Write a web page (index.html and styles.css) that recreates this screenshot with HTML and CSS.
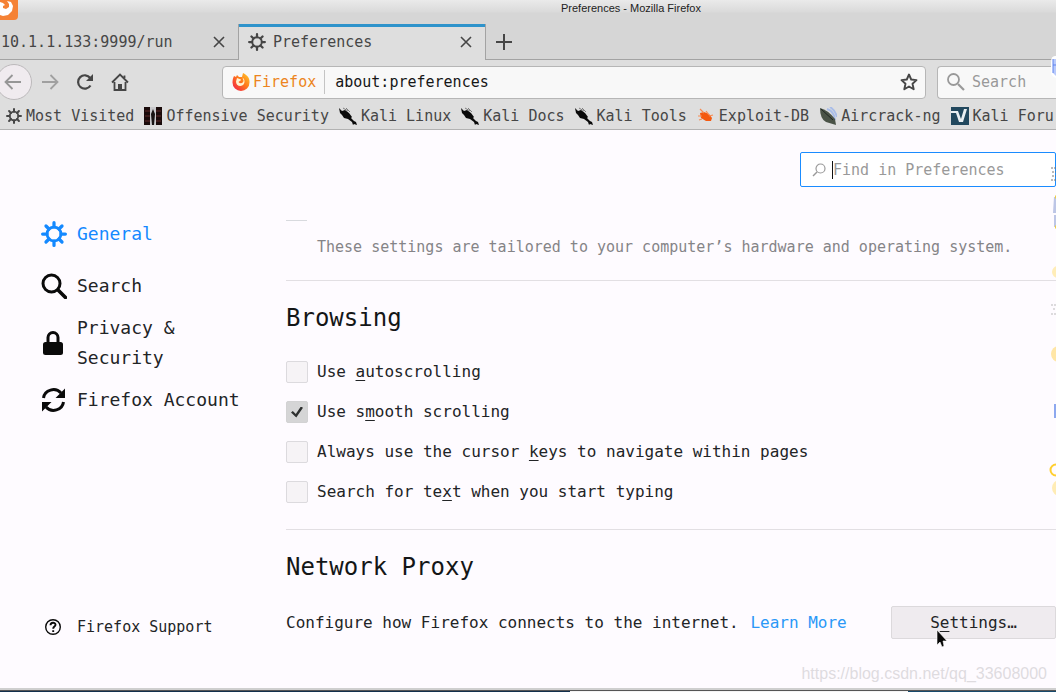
FILE: index.html
```
<!DOCTYPE html>
<html lang="en">
<head>
<meta charset="utf-8">
<title>Preferences</title>
<link rel="stylesheet" href="styles.css">
</head>
<body>
<svg class="defs" aria-hidden="true">
  <symbol id="gear" viewBox="0 0 24 24">
    <g fill="none" stroke="currentColor" stroke-linecap="round">
      <circle cx="12" cy="12" r="6.4" stroke-width="2.6"/>
      <path stroke-width="3" d="M12 1.500v4M12 18.500v4M1.500 12h4M18.500 12h4M4.600 4.600l2.800 2.800M16.600 16.600l2.800 2.800M4.600 19.400l2.800-2.800M16.600 7.400l2.800-2.800"/>
    </g>
  </symbol>
  <symbol id="close" viewBox="0 0 12 12"><path d="M1 1l10 10M11 1L1 11" fill="none" stroke="currentColor" stroke-width="1.600"/></symbol>
  <symbol id="kali" viewBox="0 0 18 18">
    <path d="M0 1l3 3 3-1 4 3 3 4-1 1 3 3 2 1 1 3-3-1-1 1-1-3-4-3-4-1-2-3-2-2z" fill="#0a0a0a"/>
    <path d="M4 1l5 3M7 1l4 4" stroke="#666" stroke-width=".8"/>
  </symbol>
</svg>

<header class="chrome">
  <div class="titlebar">
    <svg class="app-icon" viewBox="0 0 18 20"><path d="M0 0h18v16q0 4-4 4H0z" fill="#f58235"/><path d="M0 2l3 1 2 2-2 1 0 2 3 1 3-2 0-3-2-3 4 1 2 4-1 5-4 4-5 1-3-1z" fill="#fff"/></svg>
    <h1 class="window-title">Preferences - Mozilla Firefox</h1>
  </div>
  <div class="tabs" role="tablist">
    <div class="tab">
      <span class="tab-label" role="tab">10.1.1.133:9999/run</span>
      <button class="icon-btn" aria-label="Close tab"><svg class="i12"><use href="#close"/></svg></button>
    </div>
    <div class="tab active">
      <svg class="i18"><use href="#gear"/></svg>
      <span class="tab-label" role="tab" aria-selected="true">Preferences</span>
      <button class="icon-btn" aria-label="Close tab"><svg class="i12"><use href="#close"/></svg></button>
    </div>
    <div class="tab-rest"><button class="icon-btn" aria-label="New tab"><svg class="i16" viewBox="0 0 16 16"><path d="M8 0v16M0 8h16" stroke="currentColor" stroke-width="2"/></svg></button></div>
  </div>
  <nav class="toolbar">
    <button class="icon-btn back" aria-label="Back"><svg class="i18" viewBox="0 0 18 18"><path d="M17 9H2M8.500 2L1.500 9l7 7" fill="none" stroke="currentColor" stroke-width="1.800"/></svg></button>
    <button class="icon-btn forward" aria-label="Forward"><svg class="i18" viewBox="0 0 18 18"><path d="M1 9h15M9.500 2l7 7-7 7" fill="none" stroke="currentColor" stroke-width="1.800"/></svg></button>
    <button class="icon-btn reload" aria-label="Reload"><svg class="i18" viewBox="0 0 18 18"><path d="M14.500 12.500A6.700 6.700 0 1 1 14.200 5" fill="none" stroke="currentColor" stroke-width="2.200"/><path d="M17 1v7h-7z" fill="currentColor"/></svg></button>
    <button class="icon-btn" aria-label="Home"><svg class="i18" viewBox="0 0 18 18"><path d="M1 9.500L9 1.500l8 8M13.500 5V2.500M3.500 9v8h11V9" fill="none" stroke="currentColor" stroke-width="1.800"/><path d="M7 17v-6h4v6z" fill="currentColor"/></svg></button>
    <div class="urlbar">
      <svg class="i18" viewBox="0 0 18 18">
        <defs><linearGradient id="ff" x1="1" y1="0" x2="0" y2="1"><stop offset="0" stop-color="#ffd02e"/><stop offset=".45" stop-color="#ff7a1a"/><stop offset="1" stop-color="#f0184c"/></linearGradient></defs>
        <path d="M2 3l2 1 1-2 2 2h3l1-4c4 2 7 5 6.500 9.500a8.500 8.500 0 0 1-17 0C.5 7 1 5 2 3z" fill="url(#ff)"/>
        <path d="M5 5l4 1.500c0 1.500-2 1.500-2.500 2.500 1.500 2 5 1.500 5-1.500l-1-3c3 2 3 8-2 8.500-3 0-4.500-2-4.500-4.500z" fill="#fff3d0"/>
      </svg>
      <span class="identity">Firefox</span>
      <input class="url" aria-label="Address" value="about:preferences">
      <button class="icon-btn" aria-label="Bookmark this page"><svg class="i18" viewBox="0 0 18 18"><path d="M9 1.500l2.200 5 5.300.6-4 3.600 1.200 5.500L9 13.500l-4.700 2.700 1.200-5.500-4-3.600 5.300-.6z" fill="none" stroke="currentColor" stroke-width="1.900" stroke-linejoin="round"/></svg></button>
    </div>
    <label class="searchbar">
      <svg class="i18" viewBox="0 0 18 18"><path d="M11 11l6 6" stroke="currentColor" stroke-width="2.200"/><circle cx="6.500" cy="6.500" r="5.500" fill="none" stroke="currentColor" stroke-width="1.800"/></svg>
      <input class="search" aria-label="Search" placeholder="Search">
    </label>
  </nav>
  <nav class="bookmarks">
    <a href="#"><svg class="i16"><use href="#gear"/></svg>Most Visited</a>
    <a href="#"><svg class="i18" viewBox="0 0 18 18"><path d="M0 0h18v18H0z" fill="#1a0b0b"/><path d="M1 4h5M1 9h5M1 14h5M12 4h5M12 9h5M12 14h5" stroke="#3d1a1a" stroke-width="2"/><path d="M6 0h6v18H6z" fill="#c9c9cc"/><path d="M9 2l2 5-1 11H8L7 7z" fill="#191414"/></svg>Offensive Security</a>
    <a href="#"><svg class="i18"><use href="#kali"/></svg>Kali Linux</a>
    <a href="#"><svg class="i18"><use href="#kali"/></svg>Kali Docs</a>
    <a href="#"><svg class="i18"><use href="#kali"/></svg>Kali Tools</a>
    <a href="#"><svg class="i18" viewBox="0 0 18 18"><path d="M3 6l4-1 5 2 3 4-1 3-5 0-5-3z" fill="#f4590f"/><path d="M1 9h4M3 2l4 4M9 4l3 4M12 9l4-1M5 12l-3 1" stroke="#f78b52" stroke-width="1.200"/></svg>Exploit-DB</a>
    <a href="#"><svg class="i18" viewBox="0 0 18 18"><path d="M8 2q7 2 8 11M11 0q5 3 7 10" stroke="#a9bde8" stroke-width="2" fill="none"/><path d="M1 1q0 11 6 14l10 3-1-6Q9 3 1 1z" fill="#4a5347"/><path d="M2 2l12 11" stroke="#202622"/></svg>Aircrack-ng</a>
    <a href="#"><svg class="i18" viewBox="0 0 18 18"><path d="M0 0h18v18H0z" fill="#22485e"/><path d="M0 4h7l3 8 3-10h3l-4 13H8L5 6H0z" fill="#e9eff2"/></svg>Kali Foru</a>
  </nav>
</header>

<div class="page">
  <aside class="sidebar">
    <nav class="categories">
      <a class="current" href="#"><svg class="i26"><use href="#gear"/></svg>General</a>
      <a href="#"><svg class="i26" viewBox="0 0 26 26"><path d="M17 17l7.500 7.500" stroke="currentColor" stroke-width="3.600" stroke-linecap="round"/><circle cx="10.500" cy="10.500" r="8.500" fill="none" stroke="currentColor" stroke-width="3"/></svg>Search</a>
      <a href="#"><svg class="i26" viewBox="0 0 26 26"><rect x="2" y="12" width="20" height="13" rx="2.500" fill="currentColor"/><path d="M7 13V7.500a5 5 0 0 1 10 0V13" fill="none" stroke="currentColor" stroke-width="3"/></svg>Privacy &amp; Security</a>
      <a href="#"><svg class="i26" viewBox="0 0 26 26"><path d="M2.500 11A10 9.500 0 0 1 20 6M22.500 15A10 9.500 0 0 1 5 20" fill="none" stroke="currentColor" stroke-width="3"/><path d="M24 1.500v9.500h-9.500zM1 24.500V15h9.500z" fill="currentColor"/></svg>Firefox Account</a>
    </nav>
    <a class="support" href="#"><svg class="i26" viewBox="0 0 26 26"><circle cx="12" cy="13" r="7.300" fill="none" stroke="currentColor" stroke-width="1.400"/><path d="M9.500 11.200c0-3.300 5-3.200 5-.4 0 1.900-2.300 1.700-2.300 3.900M12.200 16.200v1.800" fill="none" stroke="currentColor" stroke-width="1.900"/></svg>Firefox Support</a>
  </aside>

  <main class="content">
    <label class="find">
      <svg class="i14" viewBox="0 0 14 14"><circle cx="8.500" cy="5.500" r="4.500" fill="none" stroke="currentColor" stroke-width="1.200"/><path d="M5 9l-4 4" stroke="currentColor" stroke-width="1.500"/></svg>
      <input type="search" aria-label="Find in Preferences" placeholder="Find in Preferences">
    </label>
    <div class="clipped"></div>
    <p class="hint">These settings are tailored to your computer’s hardware and operating system.</p>
    <section class="group browsing">
      <h2>Browsing</h2>
      <label class="check"><input type="checkbox"><span>Use <u>a</u>utoscrolling</span></label>
      <label class="check"><input type="checkbox" checked><span>Use s<u>m</u>ooth scrolling</span></label>
      <label class="check"><input type="checkbox"><span>Always use the cursor <u>k</u>eys to navigate within pages</span></label>
      <label class="check"><input type="checkbox"><span>Search for te<u>x</u>t when you start typing</span></label>
    </section>
    <section class="group">
      <h2>Network Proxy</h2>
      <div class="proxy">
        <p>Configure how Firefox connects to the internet. <a href="#">Learn More</a></p>
        <button class="settings">S<u>e</u>ttings…</button>
      </div>
    </section>
  </main>
</div>
<footer class="desktop-edge"></footer>

<div class="watermark">https://blog.csdn.net/qq_33608000</div>
<svg class="pointer" viewBox="0 0 12 20"><path d="M1 0v15l3-3 2 5 2-1-1-5h4z" fill="#080808" stroke="#fff" stroke-width=".6"/></svg>
<svg class="edge-art" viewBox="0 0 8 460" aria-hidden="true">
  <path d="M8 1H7Q3 1 3 7v10q0 4 5 6z" fill="#fff"/><path d="M8 4H5v14l3 3z" fill="#b9cafb"/><path d="M5 4v14M5 10h3" stroke="#5f83ef" fill="none"/>
  <path d="M3 113h5M4 117h4M4 121h4M3 125h5" stroke="#777" stroke-dasharray="2 1"/>
  <path d="M6 142h2v16H5zM6 160h2v12H6z" fill="#bdc6e6"/><path d="M7 142h1M7 172h1" stroke="#edcf43" stroke-width="3"/>
  <circle cx="10" cy="217" r="6" fill="#ffedb8"/>
  <path d="M3 250h5M5 254h3M3 259h5" stroke="#bbb" stroke-dasharray="2 1"/>
  <circle cx="11" cy="299" r="8" fill="#ffe6a6"/>
  <path d="M7 349v14" stroke="#8da8ef" stroke-width="2"/>
  <circle cx="8" cy="415" r="5.500" fill="none" stroke="#ffcf2e" stroke-width="2"/>
  <circle cx="12" cy="433" r="8" fill="#ffecb5"/>
</svg>
</body>
</html>
```
FILE: styles.css
```
* { box-sizing: border-box; }
html, body { height: 100%; }
body {
  margin: 0;
  display: flex;
  flex-direction: column;
  overflow: hidden;
  background: #fefbff;
  color: #222426;
  font: 16px/24px "DejaVu Sans Mono", monospace;
}
h1, h2, p { margin: 0; font-weight: 400; }
a { color: inherit; text-decoration: none; }
button, input { font: inherit; color: inherit; }
svg { display: block; flex: none; }
u { text-underline-offset: 3px; text-decoration-thickness: 1px; }
.defs { position: absolute; width: 0; height: 0; }
.i12 { width: 12px; height: 12px; }
.i14 { width: 14px; height: 14px; }
.i16 { width: 16px; height: 16px; }
.i18 { width: 18px; height: 18px; }
.i26 { width: 26px; height: 26px; }

.chrome {
  flex: none;
  background: #dedede;
  border-bottom: 1px solid #b2b2b2;
  color: #464646;
  font-size: 15px;
}
.titlebar {
  height: 24px;
  position: relative;
  background: linear-gradient(#eaeaea, #dadada 12px, #d6d6d6 13px);
  text-align: center;
}
.app-icon { position: absolute; left: 0; top: 0; width: 18px; height: 20px; }
.window-title {
  padding-left: 206px;
  font: 11px/17px "Liberation Sans", sans-serif;
  color: #222;
}
.icon-btn {
  display: grid;
  place-items: center;
  padding: 0;
  border: 0;
  background: none;
}
.tabs { display: flex; height: 36px; background: #d6d6d6; }
.tab {
  display: flex;
  align-items: center;
  width: 238px;
  padding: 0 13px 0 1px;
  border-bottom: 1px solid #a3a3a3;
}
.tab-label { flex: 1; white-space: nowrap; }
.tab.active {
  width: 248px;
  gap: 7px;
  padding: 0 13px 0 9px;
  background: #dedede;
  border: solid #a3a3a3;
  border-width: 0 1px;
  box-shadow: inset 0 3px #2e93cb;
}
.tab-rest {
  flex: 1;
  display: flex;
  padding-left: 10px;
  border-bottom: 1px solid #a3a3a3;
}
.toolbar { display: flex; align-items: center; height: 44px; }
.back {
  width: 36px;
  height: 36px;
  margin-left: -4px;
  padding-right: 2px;
  border: 1px solid #bcb9bb;
  border-radius: 50%;
  background: #f0ebef;
  color: #969696;
}
.forward { margin: 0 17px 0 9px; color: #a0a0a0; }
.reload { margin-right: 17px; }
.urlbar, .searchbar {
  display: flex;
  align-items: center;
  height: 33px;
  border: 1px solid #b6b6b6;
  background: #f8f8f8;
}
.urlbar {
  flex: 1;
  margin-left: 93px;
  padding: 0 7px 0 9px;
  border-radius: 4px;
}
.identity {
  margin-left: 3px;
  padding-right: 8px;
  border-right: 1px solid #c4c4c4;
  color: #ec8420;
}
.url, .search {
  min-width: 0;
  flex: 1;
  padding: 0 0 0 10px;
  border: 0;
  outline: 0;
  background: none;
}
.url { color: #161616; }
.searchbar {
  width: 119px;
  margin-left: 11px;
  padding-left: 9px;
  border-right: 0;
  border-radius: 4px 0 0 4px;
  color: #999;
}
.search { padding-left: 7px; }
.search::placeholder { color: #999; }
.bookmarks {
  display: flex;
  gap: 10px;
  height: 25px;
  padding: 0 0 2px 6px;
  overflow: hidden;
  white-space: nowrap;
}
.bookmarks a { display: flex; flex: none; align-items: center; gap: 4px; }

.page { flex: 1; min-height: 0; display: flex; }
.sidebar {
  flex: none;
  width: 286px;
  display: flex;
  flex-direction: column;
  justify-content: space-between;
  padding: 89px 40px 48px 41px;
}
.categories { display: flex; flex-direction: column; gap: 12px; font-size: 18px; line-height: 30px; }
.categories a, .support { display: flex; align-items: center; gap: 10px; }
.categories a:first-child { margin-bottom: 10px; }
.categories a, .support { color: #222426; }
.categories svg, .support svg { color: #0a0a0a; }
.categories .current, .categories .current svg { color: #1489ff; }
.support { font-size: 15px; line-height: 26px; }

.content { flex: 1; min-width: 0; display: flex; flex-direction: column; padding-top: 22px; }
.find {
  align-self: flex-end;
  display: flex;
  align-items: center;
  gap: 6px;
  width: 256px;
  height: 35px;
  padding-left: 11px;
  border: 1px solid #1a8cff;
  border-radius: 2px;
  background: #fff;
  color: #999;
  font-size: 15px;
}
.find input {
  flex: 1;
  min-width: 0;
  height: 18px;
  padding: 0;
  border: 0;
  border-left: 1px solid #111;
  outline: 0;
  background: none;
}
.find input::placeholder { color: #999; }
.clipped { width: 21px; height: 1px; margin-top: 33px; background: #d8dade; }
.hint { margin: 14px 0 21px 31px; color: #858487; font-size: 15px; white-space: nowrap; }
.group { padding-top: 21px; border-top: 1px solid #e2dfe3; }
.group h2 { color: #141617; font-size: 24px; line-height: 32px; }
.browsing { padding-bottom: 17px; }
.browsing h2 { margin-bottom: 18px; }
.check { display: flex; align-items: center; gap: 9px; height: 40px; }
.check input {
  appearance: none;
  display: grid;
  place-items: center;
  width: 22px;
  height: 22px;
  margin: 0;
  border: 1px solid #dcdade;
  border-radius: 2px;
  background: #f6f3f6;
}
.check input:checked { border-color: #d2d2d3; background: #d5d5d6; }
.check input:checked::after {
  content: "";
  width: 12px;
  height: 11px;
  background: #2e3030;
  clip-path: polygon(0 55%, 15% 42%, 40% 68%, 82% 0, 100% 12%, 44% 100%);
}
.proxy { display: flex; align-items: center; justify-content: space-between; margin-top: 23px; }
.proxy p { white-space: nowrap; }
.proxy a { margin-left: 2px; color: #2a98f7; }
.settings {
  width: 165px;
  height: 33px;
  padding: 0;
  border: 1px solid #dcd9dc;
  border-radius: 2px;
  background: #efebef;
}
.desktop-edge {
  flex: none;
  height: 4px;
  border-top: 2px solid #cfcfcf;
  background: linear-gradient(#555, #555) 0 0 / 100% 1px no-repeat,
    linear-gradient(90deg, #12304c 54%, #f4f4f4 54% 86%, #174a6c 86%);
}
.watermark {
  position: absolute;
  right: 9px;
  bottom: 8px;
  color: #dedbdf;
  font: 16px/20px "Liberation Sans", sans-serif;
}
.pointer { position: absolute; left: 936px; top: 630px; width: 12px; height: 20px; }
.edge-art { position: absolute; right: 0; top: 55px; width: 8px; height: 460px; }
```
